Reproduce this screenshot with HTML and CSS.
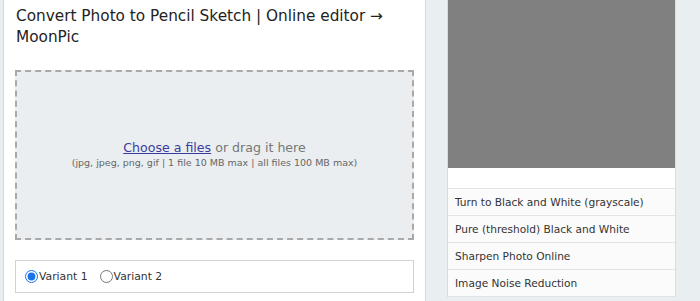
FILE: index.html
```html
<!DOCTYPE html>
<html lang="en">
<head>
    <meta charset="UTF-8">
    <title>Convert Photo to Pencil Sketch | MoonPic</title>
    <link rel="stylesheet" href="styles.css">
</head>
<body>
    <div class="page">
        <main class="main">
            <h1>Convert Photo to Pencil Sketch | Online editor → MoonPic</h1>

            <div class="dropzone">
                <div class="drop-title"><a href="#">Choose a files</a> or drag it here</div>
                <div class="drop-note">(jpg, jpeg, png, gif | 1 file 10 MB max | all files 100 MB max)</div>
            </div>

            <div class="variants">
                <label><input type="radio" name="variant" checked>Variant 1</label>
                <label><input type="radio" name="variant">Variant 2</label>
            </div>
        </main>

        <aside class="side">
            <div class="side-box">
                <div class="preview"></div>
                <div class="spacer"></div>
                <ul class="tools">
                    <li>Turn to Black and White (grayscale)</li>
                    <li>Pure (threshold) Black and White</li>
                    <li>Sharpen Photo Online</li>
                    <li>Image Noise Reduction</li>
                </ul>
            </div>
        </aside>
    </div>
</body>
</html>
```

FILE: styles.css
```css
* { box-sizing: border-box; margin: 0; padding: 0; }
body { background: #e9eef0; font-family: 'DejaVu Sans', Verdana, sans-serif; color: #222; height: 301px; overflow: hidden; }
.page { display: flex; padding-left: 3px; }

.main { width: 423px; background: #fff; border-left: 1px solid #d5d9db; border-right: 1px solid #d5d9db; padding: 6px 11px 20px 11px; min-height: 301px; }
h1 { font-size: 15.3px; font-weight: normal; line-height: 21px; color: #222; margin-bottom: 22px; padding-left: 1px; max-width: 385px; }

.dropzone { height: 170px; background: #eaeef0; border: 2px dashed #a9a9a9; display: flex; flex-direction: column; justify-content: center; align-items: center; padding-bottom: 1px; }
.drop-title { font-size: 12.6px; color: #777; line-height: 17px; }
.drop-title a { color: #3c3ca0; }
.drop-note { font-size: 9.5px; color: #666; line-height: 14px; }

.variants { margin-top: 20px; height: 33px; border: 1px solid #cfd3d5; display: flex; align-items: center; padding-left: 9px; gap: 12px; font-size: 10.8px; color: #333; }
.variants label { display: flex; align-items: center; }
.variants input { width: 13px; height: 13px; margin: 0 1px 0 0; accent-color: #1a73e8; }

.side { padding-left: 21px; }
.side-box { width: 229px; background: #fbfbfb; border-left: 1px solid #d8dcde; border-right: 1px solid #d8dcde; }
.preview { height: 168px; background: #808080; }
.spacer { height: 20px; background: #fff; }
.tools { list-style: none; }
.tools li { height: 27px; border-top: 1px solid #e2e4e6; padding: 5px 7px; font-size: 10.6px; color: #333; line-height: 16px; }
.tools li:last-child { height: 28px; border-bottom: 1px solid #e2e4e6; }
```
